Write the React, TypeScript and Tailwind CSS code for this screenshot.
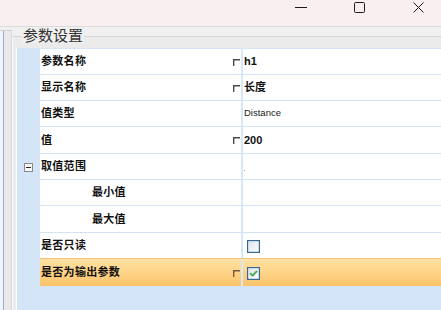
import React from "react";

type Row = {
  name: string;
  value?: string;
  mark?: boolean;
  small?: boolean;
  dot?: boolean;
  expander?: boolean;
  indent?: boolean;
  checkbox?: "on" | "off";
  selected?: boolean;
  h: number;
  noBorder?: boolean;
};

const rows: Row[] = [
  { name: "参数名称", value: "h1", mark: true, h: 26 },
  { name: "显示名称", value: "长度", mark: true, h: 26 },
  { name: "值类型", value: "Distance", small: true, h: 26 },
  { name: "值", value: "200", mark: true, h: 27 },
  { name: "取值范围", dot: true, expander: true, h: 26 },
  { name: "最小值", indent: true, h: 26 },
  { name: "最大值", indent: true, h: 27 },
  { name: "是否只读", checkbox: "off", h: 25, noBorder: true },
  { name: "是否为输出参数", checkbox: "on", mark: true, selected: true, h: 28 },
];

function CheckBox({ checked }: { checked: boolean }) {
  return (
    <svg width="13" height="13" viewBox="0 0 13 13">
      <defs>
        <linearGradient id={checked ? "cbg1" : "cbg0"} x1="0" y1="0" x2="1" y2="1">
          <stop offset="0" stopColor="#dfe3ea" />
          <stop offset="1" stopColor="#fbfcfd" />
        </linearGradient>
      </defs>
      <rect x="0.6" y="0.6" width="11.8" height="11.8" fill="#ffffff" stroke="#3a6794" strokeWidth="1.3" />
      <rect x="2" y="2" width="9" height="9" fill={`url(#${checked ? "cbg1" : "cbg0"})`} />
      {checked && (
        <path d="M3.6 6.6 L5.6 8.6 L9.6 4.4" fill="none" stroke="#3fae49" strokeWidth="1.8" strokeLinecap="round" strokeLinejoin="round" />
      )}
    </svg>
  );
}

function Mark({ brown }: { brown?: boolean }) {
  return (
    <svg className="ml-auto mr-[1px] mt-[1px] block" width="7" height="7" viewBox="0 0 7 7">
      <path d="M0.7 7 V0.7 H7" fill="none" stroke={brown ? "#7a5a3c" : "#4a4a4a"} strokeWidth="1.4" />
    </svg>
  );
}

export default function App() {
  return (
    <div className="relative flex h-[310px] w-[441px] flex-col overflow-hidden bg-[#f0f0f0] font-['Liberation_Sans','Noto_Sans_CJK_SC',sans-serif]">
      {/* title bar */}
      <div className="flex h-[27px] shrink-0 items-start border-b border-[#dcdcdc] bg-[#f9eef0]">
        <div className="w-[295px]" />
        <svg className="mt-[7px]" width="12" height="2" viewBox="0 0 12 2">
          <line x1="0" y1="0.5" x2="12" y2="0.5" stroke="#1b1b1b" strokeWidth="1" />
        </svg>
        <svg className="ml-[47px] mt-[2px]" width="11" height="11" viewBox="0 0 11 11">
          <rect x="0.5" y="0.5" width="10" height="10" rx="1.2" fill="none" stroke="#1b1b1b" strokeWidth="1" />
        </svg>
        <svg className="ml-[48px] mt-[2px]" width="11" height="11" viewBox="0 0 11 11">
          <path d="M0.5 0.5 L10.5 10.5 M10.5 0.5 L0.5 10.5" stroke="#1b1b1b" strokeWidth="1" />
        </svg>
      </div>

      {/* body */}
      <div className="flex flex-1">
        {/* left strip */}
        <div className="flex w-[12px] flex-col">
          <div className="h-[3px]" />
          <div className="flex flex-1 border-t border-[#d2d2d2]">
            <div className="w-[3px] bg-[#f2f4f8]" />
            <div className="w-[1px] bg-[#8caedf]" />
            <div className="flex-1 bg-[#e9e9e9]" />
            <div className="w-[1px] bg-[#d8d8d8]" />
          </div>
        </div>

        {/* group box */}
        <div className="mt-[9px] flex flex-1 flex-col border-l border-t border-l-[#f8f8f8] border-t-[#d6d6d6] bg-[#ebebeb]">
          <div className="-mt-[9px] ml-[9px] w-fit bg-[#f0f0f0] px-[1px] text-[15px] leading-[15px] text-[#333333]">
            参数设置
          </div>
          <div className="ml-[3px] mt-[5px] flex flex-1 flex-col border-l border-white bg-[#d5e5f8] pt-[1px]">
            {rows.map((r, i) => (
              <div key={i} className="flex shrink-0" style={{ height: r.h }}>
                <div className="flex w-[23px] items-center justify-center">
                  {r.expander && (
                    <div className="flex h-[9px] w-[9px] items-center justify-center border border-[#8a8a8a] bg-[#f7f7f7]">
                      <div className="h-[1px] w-[5px] bg-[#2a2a2a]" />
                    </div>
                  )}
                </div>
                <div
                  className={`flex flex-1 ${
                    r.selected
                      ? "border-t border-[#f4c27e] bg-linear-to-b from-[#fee2a2] to-[#fcc46b]"
                      : r.noBorder
                      ? ""
                      : "border-b border-[#d3e2f5]"
                  }`}
                >
                  <div
                    className={`flex w-[201px] items-center ${r.selected ? "" : "bg-white"} ${
                      r.indent ? "pl-[52px]" : "pl-[1px]"
                    }`}
                  >
                    <span className="text-[11px] font-bold tracking-[0.3px] text-[#111]">{r.name}</span>
                    {r.mark && <Mark brown={r.selected} />}
                  </div>
                  <div className="w-[2px] bg-[#dae7f7]" />
                  <div className={`flex flex-1 items-center ${r.selected ? "" : "bg-white"}`}>
                    {r.value && !r.small && (
                      <span className="pl-[1px] text-[11px] font-bold text-[#111]">{r.value}</span>
                    )}
                    {r.value && r.small && (
                      <span className="pl-[1px] text-[9.5px] text-[#1a1a1a]">{r.value}</span>
                    )}
                    {r.dot && <span className="ml-[1px] mt-[7px] block h-[1px] w-[1px] bg-[#9aa4b4]" />}
                    {r.checkbox && (
                      <span className="ml-[4px] mt-[1px] flex">
                        <CheckBox checked={r.checkbox === "on"} />
                      </span>
                    )}
                  </div>
                </div>
              </div>
            ))}
            <div className="flex-1" />
          </div>
        </div>
      </div>
    </div>
  );
}
